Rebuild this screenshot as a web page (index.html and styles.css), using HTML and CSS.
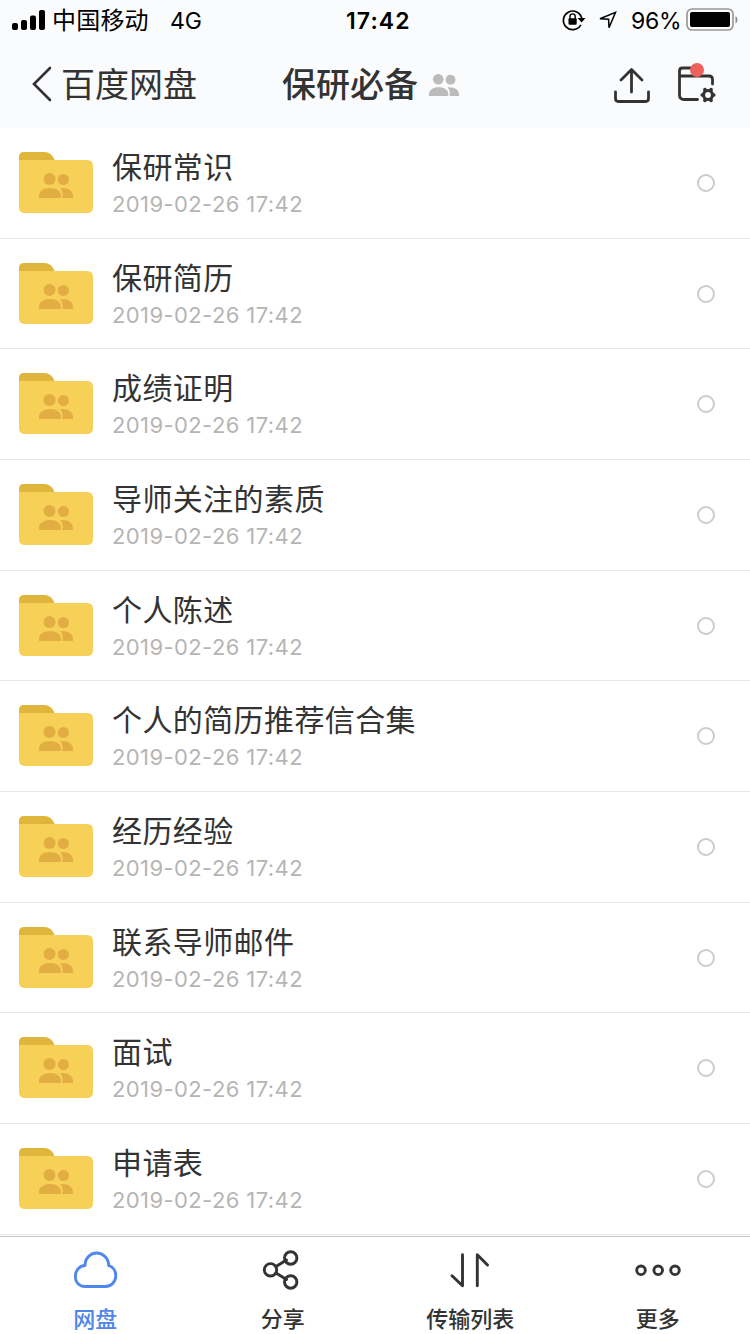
FILE: index.html
```html
<!DOCTYPE html>
<html lang="zh-CN">
<head>
<meta charset="utf-8">
<title>保研必备</title>
<link rel="stylesheet" href="styles.css">
</head>
<body>
<svg class="defs" aria-hidden="true">
  <symbol id="people" viewBox="0 0 34 26">
    <circle cx="10.5" cy="6" r="6"/><circle cx="24.4" cy="6.5" r="5.6"/>
    <path d="M0 25v-2c0-5 4.500-8 11-8s11 3 11 8c0 1-.3 2-1 2z"/>
    <path d="M21 15.200c8-.8 13 3 13 7.800v2H23.300c.7-3.500.6-7-2.300-9.800z"/>
  </symbol>
  <symbol id="folder" viewBox="0 0 74 62">
    <path fill="#dfb53c" d="M0 16V5Q0 0 5 0H25Q33 0 36 9V16Z"/>
    <path fill="#f7d057" d="M0 8H68Q74 8 74 14V55Q74 61 68 61H6Q0 61 0 55Z"/>
    <use href="#people" x="20" y="21" width="34" height="26" fill="#e2ae44"/>
  </symbol>
</svg>
<div class="screen">
  <header class="top">
    <div class="status">
      <svg class="signal" viewBox="0 0 34 20"><rect x="0" y="13" width="6" height="7" rx="2"/><rect x="9" y="10" width="6" height="10" rx="2"/><rect x="18" y="5.500" width="6" height="14.500" rx="2"/><rect x="27" y="0" width="6" height="20" rx="2"/></svg>
      <span class="carrier">中国移动</span>
      <span class="network">4G</span>
      <span class="clock">17:42</span>
      <svg class="lock" viewBox="0 0 24 22"><path d="M18.800 15.900A9.300 9.300 0 1 1 19.800 9.500" fill="none" stroke="#000" stroke-width="1.700"/><path d="M15.500 9h8l-3.800 4.500z"/><rect x="6.500" y="9.300" width="8.200" height="6.400" rx="1"/><path d="M8 10V7.500a2.600 2.600 0 0 1 5.200 0v2.500" fill="none" stroke="#000" stroke-width="1.400"/></svg>
      <svg class="location" viewBox="0 0 20 20"><path d="M2 8.800L17.500 2.300L11 17.800L10.600 9.200Z" fill="none" stroke="#000" stroke-width="1.500"/></svg>
      <span class="percent">96%</span>
      <svg class="battery" viewBox="0 0 54 24"><rect x="1" y="1" width="46" height="21" rx="5" fill="none" stroke="#999" stroke-width="1.700"/><rect x="4" y="4" width="40" height="15" rx="2"/><path d="M49.500 8a4.500 4.500 0 0 1 0 7.500z" fill="#888"/></svg>
    </div>
    <nav class="nav">
      <svg class="chevron" viewBox="0 0 20 36"><path d="M18 2L2 18L18 34"/></svg>
      <span class="back">百度网盘</span>
      <h1 class="title">保研必备</h1>
      <svg class="title-people"><use href="#people"/></svg>
      <svg class="upload" viewBox="0 0 36 35"><path d="M1.500 24V30.500Q1.500 33.500 4.500 33.500H31.500Q34.500 33.500 34.500 30.500V24M17.500 24V2M7 12L17.500 1.500L28 12"/></svg>
      <svg class="manage" viewBox="0 0 40 42"><path d="M20.500 36.500H7Q2.500 36.500 2.500 32V8Q2.500 5 5.500 5H16L19 13H32Q35.500 13 35.500 16.500V21M2.500 13H20"/><path class="gear-teeth" d="M27.900 26.600L34.100 37.400M34.100 26.600L27.900 37.400M25.200 32H36.800"/><circle class="gear" cx="31" cy="32" r="4.500"/><circle cx="20" cy="7" r="7" fill="#ee615d"/></svg>
    </nav>
  </header>
  <main class="list">
    <div class="row"><svg class="folder"><use href="#folder"/></svg><div class="info"><div class="name">保研常识</div><div class="date">2019-02-26 17:42</div></div><i class="radio"></i></div>
    <div class="row"><svg class="folder"><use href="#folder"/></svg><div class="info"><div class="name">保研简历</div><div class="date">2019-02-26 17:42</div></div><i class="radio"></i></div>
    <div class="row"><svg class="folder"><use href="#folder"/></svg><div class="info"><div class="name">成绩证明</div><div class="date">2019-02-26 17:42</div></div><i class="radio"></i></div>
    <div class="row"><svg class="folder"><use href="#folder"/></svg><div class="info"><div class="name">导师关注的素质</div><div class="date">2019-02-26 17:42</div></div><i class="radio"></i></div>
    <div class="row"><svg class="folder"><use href="#folder"/></svg><div class="info"><div class="name">个人陈述</div><div class="date">2019-02-26 17:42</div></div><i class="radio"></i></div>
    <div class="row"><svg class="folder"><use href="#folder"/></svg><div class="info"><div class="name">个人的简历推荐信合集</div><div class="date">2019-02-26 17:42</div></div><i class="radio"></i></div>
    <div class="row"><svg class="folder"><use href="#folder"/></svg><div class="info"><div class="name">经历经验</div><div class="date">2019-02-26 17:42</div></div><i class="radio"></i></div>
    <div class="row"><svg class="folder"><use href="#folder"/></svg><div class="info"><div class="name">联系导师邮件</div><div class="date">2019-02-26 17:42</div></div><i class="radio"></i></div>
    <div class="row"><svg class="folder"><use href="#folder"/></svg><div class="info"><div class="name">面试</div><div class="date">2019-02-26 17:42</div></div><i class="radio"></i></div>
    <div class="row"><svg class="folder"><use href="#folder"/></svg><div class="info"><div class="name">申请表</div><div class="date">2019-02-26 17:42</div></div><i class="radio"></i></div>
  </main>
  <footer class="tabs">
    <div class="tab active"><svg viewBox="0 0 48 44"><path d="M14 39.500C7.500 39.500 4.300 34.500 4.300 29.500C4.300 23.500 8.500 18.800 14 18.500C14 11 19.500 6 25.500 6C32 6 37.500 11 37.800 18.700C42 20 44.800 24 44.800 28.500C44.800 34.500 40.500 39.500 34.500 39.500Z"/></svg><span>网盘</span></div>
    <div class="tab"><svg viewBox="0 0 48 44"><path d="M17 19.500L27.500 13M17 26L27.500 32.500"/><circle cx="11.500" cy="22.800" r="6.200"/><circle cx="31.700" cy="11" r="6.200"/><circle cx="31.700" cy="35" r="6.200"/></svg><span>分享</span></div>
    <div class="tab"><svg viewBox="0 0 48 44"><path d="M6 28.800L16.500 38.800V7.800M31.300 38.800V7.800L41.500 18"/></svg><span>传输列表</span></div>
    <div class="tab"><svg viewBox="0 0 48 44"><circle cx="7" cy="23.300" r="4.300"/><circle cx="24.200" cy="23.300" r="4.300"/><circle cx="41" cy="23.300" r="4.300"/></svg><span>更多</span></div>
  </footer>
</div>
</body>
</html>
```
FILE: styles.css
```css
* { box-sizing: border-box; }
body {
  margin: 0;
  background: #fff;
  color: #333;
  font-family: Inter, "Noto Sans CJK SC", sans-serif;
}
svg { display: block; flex: none; overflow: visible; }
.defs { position: absolute; width: 0; height: 0; }
.screen { width: 750px; height: 1334px; display: flex; flex-direction: column; overflow: hidden; }
.top { height: 128px; background: #fafbfd; }
.status {
  height: 40px;
  display: flex;
  align-items: center;
  padding-left: 12px;
  color: #000;
  font-size: 23px;
  line-height: 38px;
  white-space: nowrap;
}
.status span { padding-top: 2px; }
.signal { width: 34px; height: 20px; }
.carrier { width: 118px; padding-left: 6px; font-size: 24px; letter-spacing: .2px; }
.network { width: 182px; padding-left: 6px; letter-spacing: -.1px; }
.clock { width: 216px; font-weight: 600; letter-spacing: 1.1px; }
.lock { width: 24px; height: 22px; }
.location { width: 20px; height: 20px; margin-left: 12px; }
.percent { width: 55px; margin-left: 13px; letter-spacing: -.3px; }
.battery { width: 54px; height: 24px; }
.nav { height: 88px; display: flex; align-items: center; padding-left: 32px; line-height: 86px; white-space: nowrap; }
.chevron { width: 20px; height: 36px; fill: none; stroke: #333; stroke-width: 2.6; stroke-linecap: round; }
.back { width: 220px; padding: 2px 0 0 9px; font-size: 34px; }
.title { margin: 0; width: 157px; padding: 2px 0 0 10px; font-size: 34px; font-weight: 500; }
.title-people { width: 30px; height: 23px; fill: #bbb; margin: 3px 1px 0 0; }
.upload { width: 36px; height: 35px; margin: 2px 0 0 154px; fill: none; stroke: #333; stroke-width: 2.8; stroke-linecap: round; stroke-linejoin: round; }
.manage { width: 40px; height: 42px; margin-left: 27px; }
.manage path { fill: none; stroke: #333; stroke-width: 2.8; stroke-linecap: round; stroke-linejoin: round; }
.manage .gear-teeth { stroke-width: 3.6; }
.manage .gear { fill: #fafbfd; stroke: #333; stroke-width: 3.2; }
.list { flex: 1; min-height: 0; }
.row { height: 110.67px; display: flex; align-items: flex-start; padding: 24px 35px 0 19px; border-bottom: 1px solid #e8e8e8; }
.folder { width: 74px; height: 62px; }
.info { flex: 1; padding-left: 19px; white-space: nowrap; }
.name { height: 36px; margin-top: -3px; line-height: 36px; font-size: 30px; letter-spacing: .4px; }
.date { height: 28px; margin-top: 5px; line-height: 28px; font-size: 22px; letter-spacing: .4px; color: #b5b5b5; }
.radio { width: 18px; height: 18px; margin-top: 22px; border: 2px solid #ccc; border-radius: 50%; }
.tabs { height: 98px; display: grid; grid-template-columns: repeat(4, 187.5px); border-top: 1px solid #c4c8c8; background: #fff; }
.tab { display: flex; flex-direction: column; align-items: center; padding-top: 10px; padding-left: 3px; font-size: 22px; font-weight: 500; line-height: 32px; }
.tab svg { width: 48px; height: 44px; fill: none; stroke: #333; stroke-width: 2.9; stroke-linecap: round; stroke-linejoin: round; }
.tab span { margin-top: 12px; }
.active { color: #4f86ec; }
.active svg { stroke: #5087ee; }
```
